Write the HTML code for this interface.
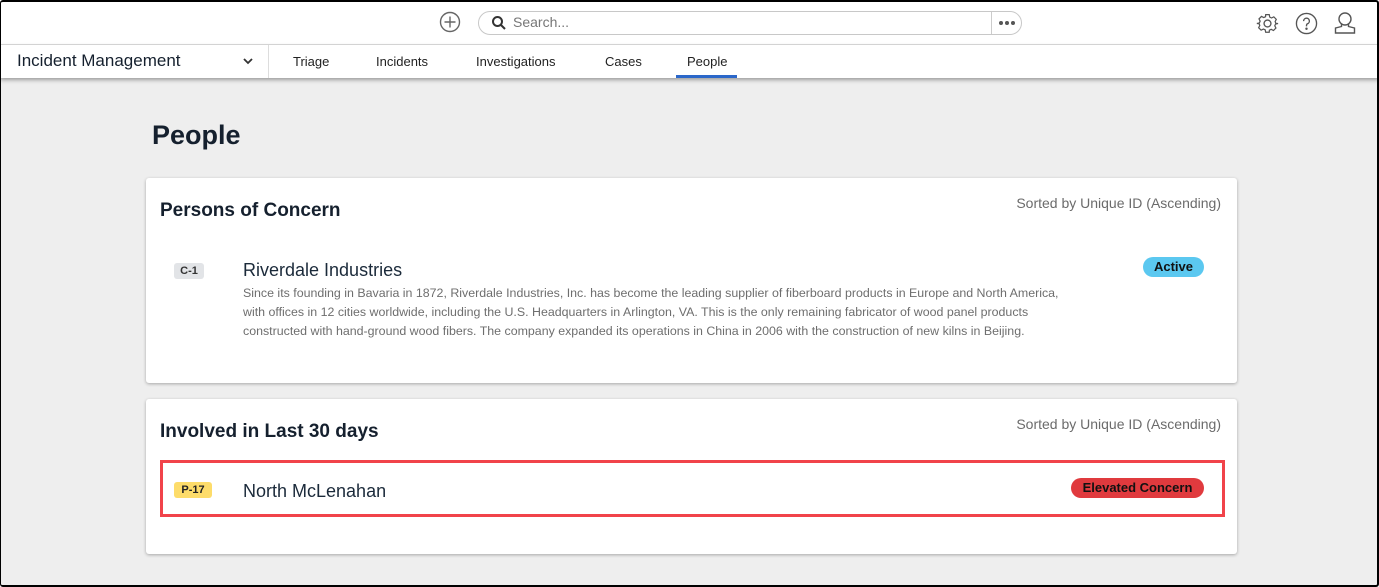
<!DOCTYPE html>
<html><head><meta charset="utf-8"><style>
*{box-sizing:border-box;margin:0;padding:0}
html,body{width:1379px;height:587px;overflow:hidden}
body{background:#eeeeee;font-family:"Liberation Sans",sans-serif;position:relative;color:#1b2a3a}
.frame{position:absolute;left:0;top:0;width:1379px;height:587px;border:2px solid #000;border-left-width:1px;border-radius:3px;pointer-events:none;z-index:50}
.top{position:absolute;left:0;top:0;width:1379px;height:45px;background:#fff;border-bottom:1px solid #dcdcdc}
.nav{position:absolute;left:0;top:45px;width:1379px;height:33px;background:#fff;box-shadow:0 2px 4px rgba(0,0,0,.35)}
.abs{position:absolute}
.search{left:478px;top:11px;width:544px;height:24px;border:1px solid #c8c8c8;border-radius:12px;background:#fff}
.card{position:absolute;left:146px;width:1091px;background:#fff;border-radius:3px;box-shadow:0 1px 3px rgba(0,0,0,.3)}
.sorted{position:absolute;right:16px;font-size:14px;color:#6b6b6b}
.ct{position:absolute;left:14px;font-size:19px;font-weight:bold;color:#15202e}
.badge{position:absolute;font-size:11px;font-weight:bold;border-radius:3px;text-align:center;height:16px;line-height:16px}
.pill{position:absolute;font-size:13px;font-weight:bold;border-radius:10px;height:20px;line-height:20px;text-align:center;color:#111}
.tab{position:absolute;top:54px;font-size:13px;color:#222}
</style></head><body>
<div class="top"></div>
<svg class="abs" style="left:439px;top:11px" width="22" height="22" viewBox="0 0 22 22" fill="none" stroke="#666" stroke-width="1.4"><circle cx="11" cy="11" r="9.5"/><path d="M11 5.5v11M5.5 11h11"/></svg>
<div class="abs search"></div>
<svg class="abs" style="left:491px;top:15px" width="16" height="16" viewBox="0 0 16 16" fill="none" stroke="#333" stroke-width="2"><circle cx="6.5" cy="6.5" r="4.5"/><path d="M10 10l4 4"/></svg>
<div class="abs" style="left:513px;top:14px;font-size:14px;color:#777">Search...</div>
<div class="abs" style="left:991px;top:12px;width:1px;height:22px;background:#ccc"></div>
<svg class="abs" style="left:998px;top:20px" width="18" height="6" viewBox="0 0 18 6" fill="#555"><circle cx="3" cy="3" r="2"/><circle cx="9" cy="3" r="2"/><circle cx="15" cy="3" r="2"/></svg>
<svg class="abs" style="left:1256px;top:12px" width="23" height="23" viewBox="0 0 24 24" fill="none" stroke="#555" stroke-width="1.4"><path d="M10 2h4l.6 2.8 2 1 2.6-1.3 2.8 2.8-1.3 2.6.9 2L24 12v0l-2.8.6-.9 2 1.3 2.6-2.8 2.8-2.6-1.3-2 .9L14 22h-4l-.6-2.8-2-.9-2.6 1.3-2.8-2.8 1.3-2.6-.9-2L0 12l2.8-.6.9-2-1.3-2.6L5.2 4l2.6 1.3 2-1z" transform="scale(.92) translate(1 1)"/><circle cx="12" cy="12" r="3.6"/></svg>
<svg class="abs" style="left:1295px;top:12px" width="23" height="23" viewBox="0 0 24 24" fill="none" stroke="#555" stroke-width="1.4"><circle cx="12" cy="12" r="10.5"/><path d="M9 9.5a3 3 0 1 1 4 2.8c-.8.4-1 1-1 2v.7"/><circle cx="12" cy="17.5" r=".6" fill="#555"/></svg>
<svg class="abs" style="left:1333px;top:11px" width="24" height="24" viewBox="0 0 24 24" fill="none" stroke="#555" stroke-width="1.4"><circle cx="12" cy="8" r="6"/><path d="M8.5 13v2.5L2.5 17v5h19v-5l-6-1.5V13"/></svg>
<div class="nav"></div>
<div class="abs" style="left:17px;top:51px;font-size:17px;color:#15202e">Incident Management</div>
<svg class="abs" style="left:243px;top:57px" width="10" height="8" viewBox="0 0 10 8" fill="none" stroke="#333" stroke-width="1.8"><path d="M1 2l4 4 4-4"/></svg>
<div class="abs" style="left:268px;top:45px;width:1px;height:33px;background:#ddd"></div>
<div class="tab" style="left:293px">Triage</div>
<div class="tab" style="left:376px">Incidents</div>
<div class="tab" style="left:476px">Investigations</div>
<div class="tab" style="left:605px">Cases</div>
<div class="tab" style="left:687px">People</div>
<div class="abs" style="left:676px;top:75px;width:61px;height:3px;background:#2b67c9"></div>

<div class="abs" style="left:152px;top:120px;font-size:27px;font-weight:bold;color:#15202e">People</div>

<div class="card" style="top:178px;height:205px">
<div class="ct" style="top:22px">Persons of Concern</div>
<div class="sorted" style="top:17px">Sorted by Unique ID (Ascending)</div>
<div class="badge" style="left:28px;top:85px;width:30px;background:#e2e4e7;color:#333">C-1</div>
<div class="abs" style="left:97px;top:82px;font-size:18px;color:#1b2a3a">Riverdale Industries</div>
<div class="abs" style="left:97px;top:106px;width:835px;font-size:12.4px;line-height:19px;color:#6e6e6e">Since its founding in Bavaria in 1872, Riverdale Industries, Inc. has become the leading supplier of fiberboard products in Europe and North America, with offices in 12 cities worldwide, including the U.S. Headquarters in Arlington, VA. This is the only remaining fabricator of wood panel products constructed with hand-ground wood fibers. The company expanded its operations in China in 2006 with the construction of new kilns in Beijing.</div>
<div class="pill" style="left:997px;top:79px;width:61px;background:#5bc8f0">Active</div>
</div>

<div class="card" style="top:399px;height:155px">
<div class="ct" style="top:22px">Involved in Last 30 days</div>
<div class="sorted" style="top:17px">Sorted by Unique ID (Ascending)</div>
<div class="abs" style="left:14px;top:61px;width:1065px;height:57px;border:3px solid #f1434a"></div>
<div class="badge" style="left:28px;top:83px;width:38px;background:#fddc6a;color:#222">P-17</div>
<div class="abs" style="left:97px;top:82px;font-size:18px;color:#1b2a3a">North McLenahan</div>
<div class="pill" style="left:925px;top:79px;width:133px;background:#e03a3e">Elevated Concern</div>
</div>
<div class="frame"></div>
</body></html>
